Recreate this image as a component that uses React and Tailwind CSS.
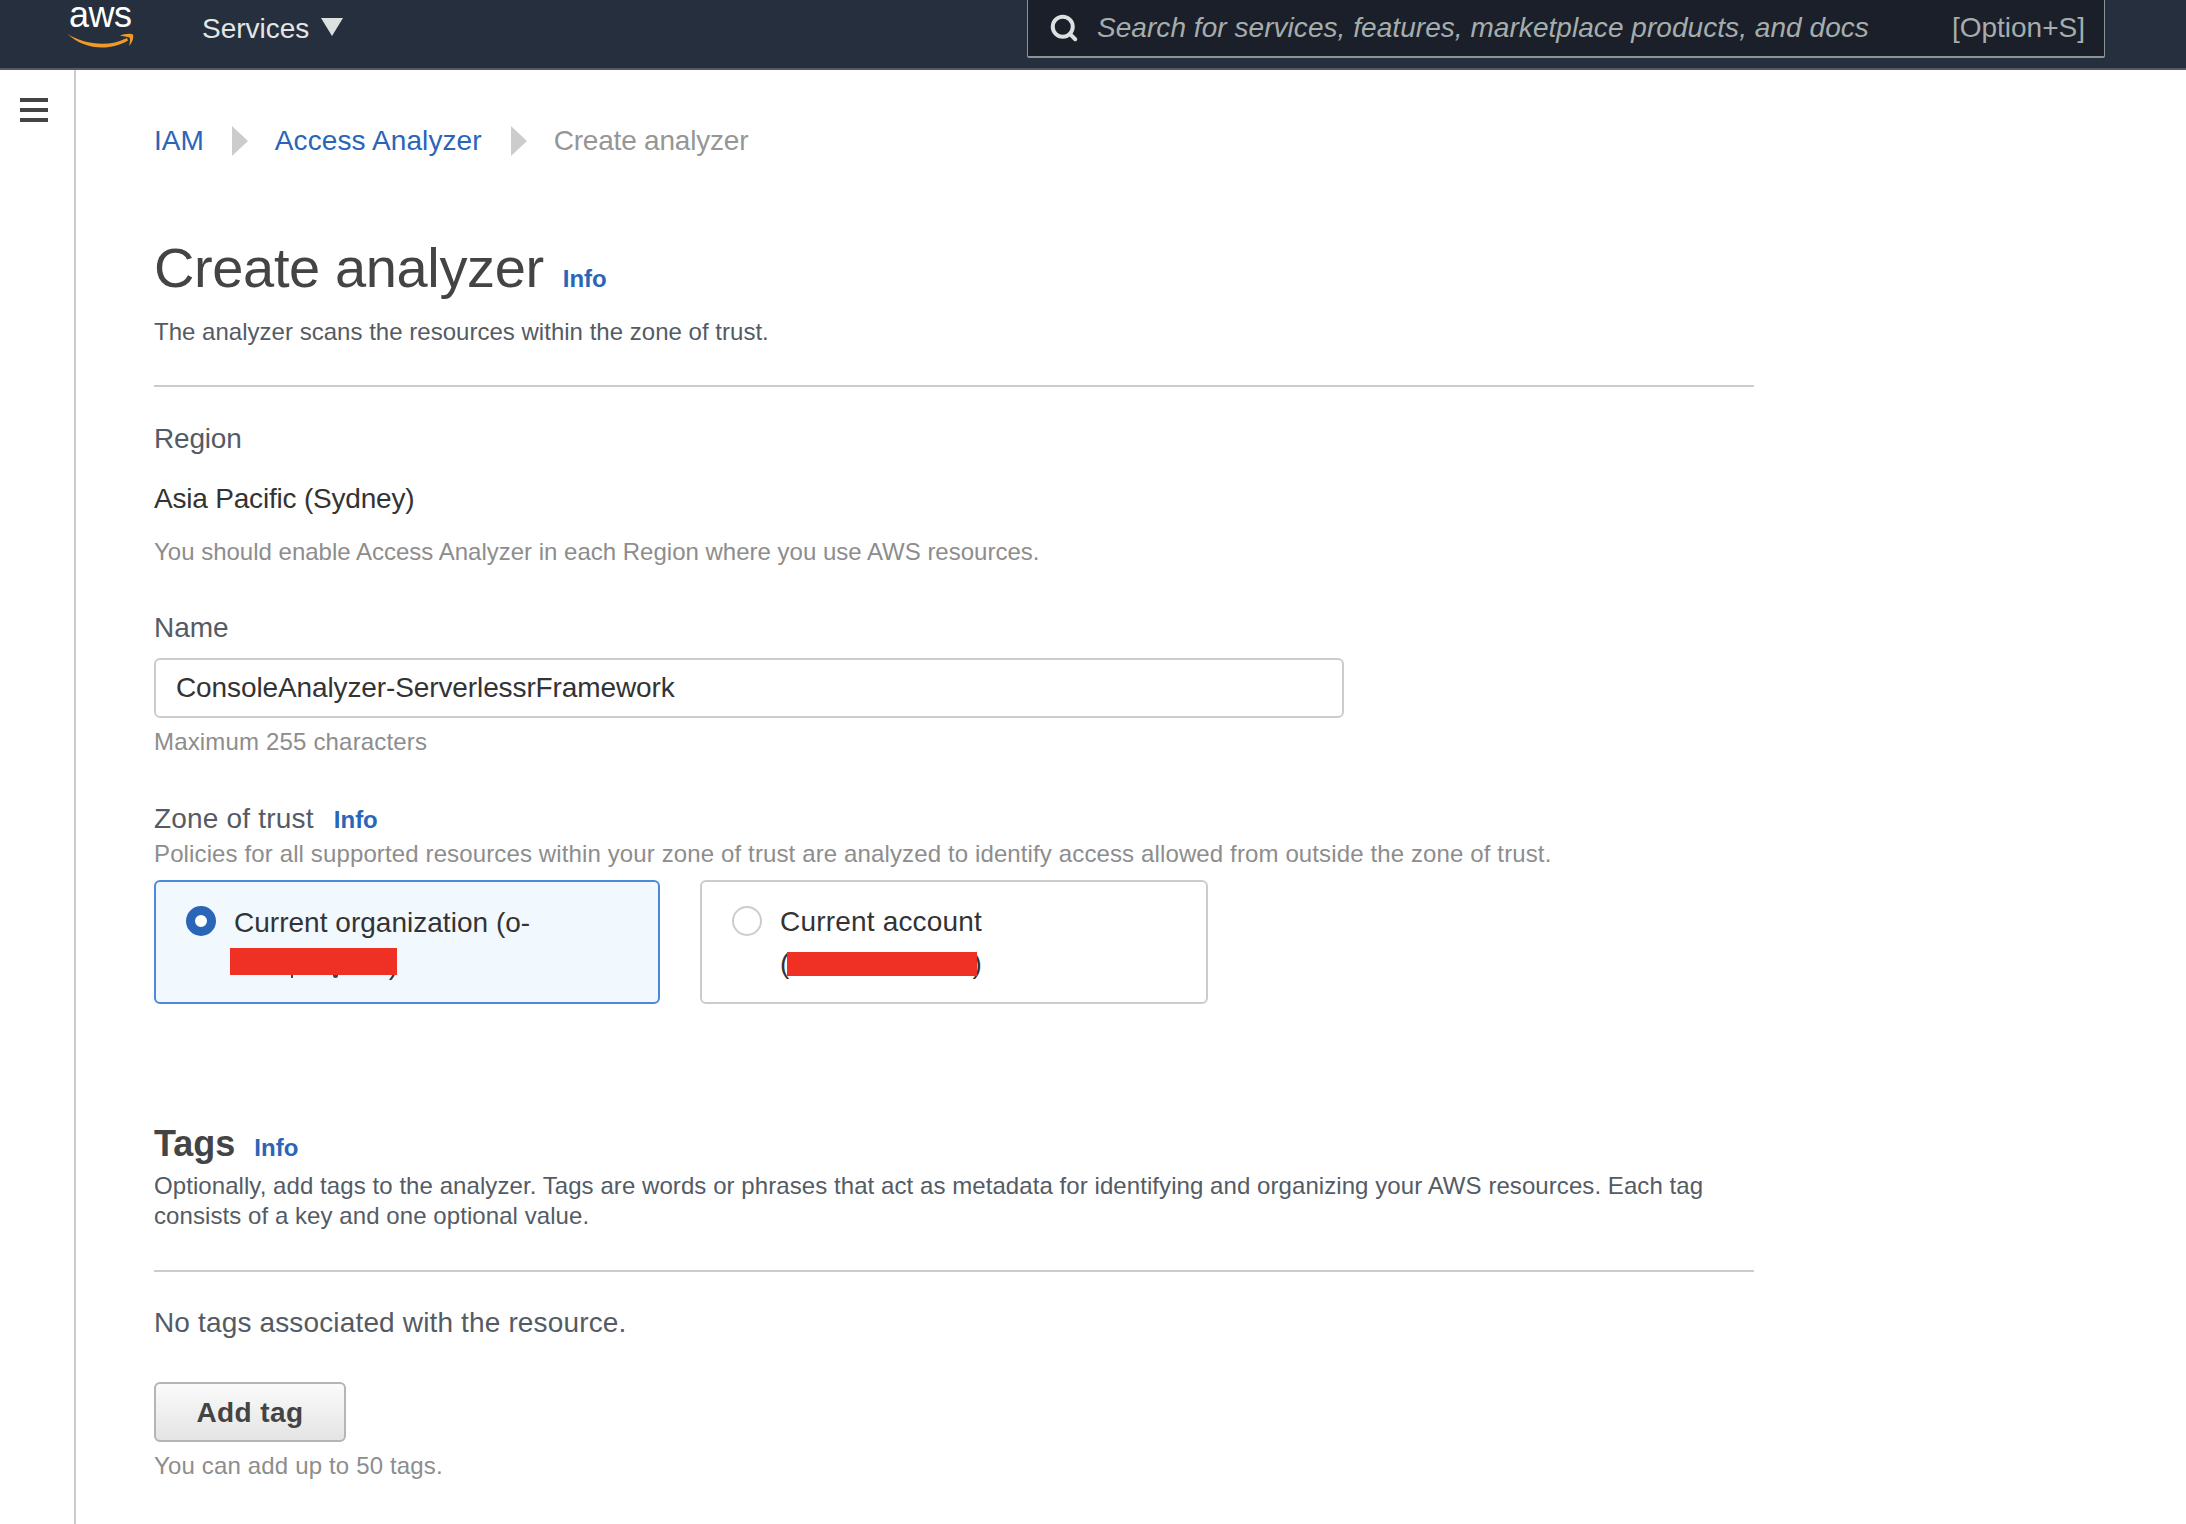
import { Search } from 'lucide-react';

function Info({ className = '' }) {
  return <a className={`font-bold text-[#2a65b8] ${className}`}>Info</a>;
}

function Crumb({ className = '' }) {
  return (
    <svg width="18" height="30" viewBox="0 0 18 30" className={`mr-[26px] ${className}`}>
      <path d="M1 0 L17 15 L1 30 Z" fill="#cccccc" />
    </svg>
  );
}

function AwsLogo() {
  return (
    <div className="relative w-[68px] h-[68px]">
      <span className="absolute left-[2px] top-0 text-[36px] leading-[30px] text-white tracking-[-0.5px]">aws</span>
      <svg width="68" height="16" viewBox="0 0 68 16" className="absolute left-0 top-[33px]">
        <path d="M0.5 1 C17 11 41 15 60 5 L61 7.5 C42 19 16 16 0.5 1 Z" fill="#f09a2a" />
        <path d="M53 2.5 C57 1 63 0 66 1.5 C67 5 65 10 62 13 C63 9 63.5 6 62.5 4.5 C60 3.5 56 3.5 53 2.5 Z" fill="#f09a2a" />
      </svg>
    </div>
  );
}

export default function App() {
  return (
    <div className="w-[2186px] h-[1524px] overflow-hidden flex flex-col bg-white font-['Liberation_Sans',sans-serif] text-[#444444]">
      <header className="h-[70px] shrink-0 flex items-start bg-[#252f3e] border-b-2 border-[#545b64] pl-[67px] pr-[81px]">
        <AwsLogo />
        <div className="ml-[67px] h-[57px] flex items-center text-[28px] text-[#e3e6e6]">
          Services
          <svg width="22" height="18" viewBox="0 0 22 18" className="ml-[12px] mt-[-3px]">
            <path d="M0 0 H22 L11 18 Z" fill="#dbe0e0" />
          </svg>
        </div>
        <div className="ml-auto w-[1078px] h-[58px] flex items-center bg-[#1a1f29] border border-[#879596] border-t-0 border-b-2 rounded-b-[2px] pl-[21px] pr-[19px] text-[28px] text-[#a5adad]">
          <Search size={30} strokeWidth={3.2} className="text-[#dbe0e0] shrink-0" />
          <span className="ml-[18px] italic tracking-[0.05px]">Search for services, features, marketplace products, and docs</span>
          <span className="ml-auto">[Option+S]</span>
        </div>
      </header>

      <div className="flex flex-1">
        <aside className="w-[76px] shrink-0 border-r-2 border-[#cccccc] pl-[20px] pt-[28px]">
          <div className="flex flex-col gap-[6px] w-[28px]">
            <div className="h-[4px] bg-[#444444]" />
            <div className="h-[4px] bg-[#444444]" />
            <div className="h-[4px] bg-[#444444]" />
          </div>
        </aside>

        <main className="w-[1678px] pl-[78px] pt-[51px]">
          <nav className="h-[40px] flex items-center text-[28px]">
            <a className="text-[#2a65b8]">IAM</a>
            <Crumb className="ml-[27px]" />
            <a className="text-[#2a65b8] tracking-[0.1px]">Access Analyzer</a>
            <Crumb className="ml-[28px]" />
            <span className="text-[#969696] tracking-[-0.2px]">Create analyzer</span>
          </nav>

          <div className="mt-[72px] h-[70px] flex items-baseline">
            <h1 className="text-[56px] leading-[70px] tracking-[-0.37px]">Create analyzer</h1>
            <Info className="ml-[19px] text-[24px]" />
          </div>
          <p className="mt-[14px] text-[24px] leading-[30px] text-[#545b64] tracking-[0.02px]">The analyzer scans the resources within the zone of trust.</p>
          <div className="mt-[38px] h-[2px] bg-[#cccccc]" />

          <div className="mt-[36px] text-[28px] leading-[32px] text-[#545b64] tracking-[-0.2px]">Region</div>
          <div className="mt-[28px] text-[28px] leading-[32px] text-[#333333] tracking-[-0.2px]">Asia Pacific (Sydney)</div>
          <p className="mt-[22px] text-[24px] leading-[30px] text-[#8d8d8d]">You should enable Access Analyzer in each Region where you use AWS resources.</p>

          <div className="mt-[45px] text-[28px] leading-[32px] text-[#545b64]">Name</div>
          <input
            readOnly
            value="ConsoleAnalyzer-ServerlessrFramework"
            className="block mt-[14px] w-[1190px] h-[60px] border-2 border-[#cccccc] rounded-[6px] px-[20px] text-[28px] text-[#333333] tracking-[-0.11px] outline-none"
          />
          <p className="mt-[9px] text-[24px] leading-[30px] text-[#8d8d8d] tracking-[0.17px]">Maximum 255 characters</p>

          <div className="mt-[46px] h-[32px] flex items-baseline text-[28px] leading-[32px] text-[#545b64] tracking-[0.2px]">
            Zone of trust
            <Info className="ml-[20px] text-[24px] tracking-normal" />
          </div>
          <p className="mt-[4px] text-[24px] leading-[30px] text-[#8d8d8d] tracking-[0.125px]">Policies for all supported resources within your zone of trust are analyzed to identify access allowed from outside the zone of trust.</p>

          <div className="mt-[11px] flex gap-[40px]">
            <div className="relative w-[506px] h-[124px] flex items-start border-2 border-[#4a8ad8] rounded-[6px] bg-[#f1f8fe] pl-[30px] pt-[24px]">
              <div className="w-[30px] h-[30px] rounded-full border-[9px] border-[#2a65b8] bg-white shrink-0" />
              <div className="ml-[18px] mt-[-4px] w-[330px] text-[28px] leading-[42px] text-[#333333] tracking-[0.02px]">
                Current organization (o-
                <div className="w-[164px] text-right">)</div>
              </div>
              <div className="absolute left-[74px] top-[66px] w-[167px] h-[27px] bg-[#ee3124]" />
              <div className="absolute left-[135px] top-[93px] w-[2px] h-[3px] bg-[#444444]" />
              <div className="absolute left-[177px] top-[93px] w-[5px] h-[3px] rounded-b-full bg-[#444444]" />
            </div>
            <div className="relative w-[508px] h-[124px] flex items-start border-2 border-[#cccccc] rounded-[6px] bg-white pl-[30px] pt-[24px]">
              <div className="w-[30px] h-[30px] rounded-full border-2 border-[#cccccc] bg-white shrink-0" />
              <div className="ml-[18px] mt-[-5px] w-[330px] text-[28px] leading-[42px] text-[#333333] tracking-[0.19px]">
                Current account
                <div className="flex w-[202px] justify-between">
                  <span>(</span>
                  <span>)</span>
                </div>
              </div>
              <div className="absolute left-[85px] top-[70px] w-[190px] h-[24px] bg-[#ee3124]" />
            </div>
          </div>

          <div className="mt-[120px] h-[40px] flex items-baseline">
            <h2 className="text-[36px] leading-[40px] font-bold">Tags</h2>
            <Info className="ml-[19px] text-[24px]" />
          </div>
          <p className="mt-[7px] text-[24px] leading-[30px] text-[#545b64] w-[1600px] tracking-[0.07px]">
            Optionally, add tags to the analyzer. Tags are words or phrases that act as metadata for identifying and organizing your AWS resources. Each tag consists of a key and one optional value.
          </p>
          <div className="mt-[39px] h-[2px] bg-[#cccccc]" />
          <p className="mt-[35px] text-[28px] leading-[32px] text-[#545b64] tracking-[0.15px]">No tags associated with the resource.</p>
          <button className="block mt-[43px] w-[192px] h-[60px] pt-[2px] border-2 border-[#b5b5b5] rounded-[6px] bg-linear-to-b from-[#fbfbfb] to-[#e4e4e4] text-[28px] font-bold text-[#444444] tracking-[0.4px]">
            Add tag
          </button>
          <p className="mt-[9px] text-[24px] leading-[30px] text-[#8d8d8d] tracking-[0.16px]">You can add up to 50 tags.</p>
        </main>
      </div>
    </div>
  );
}
